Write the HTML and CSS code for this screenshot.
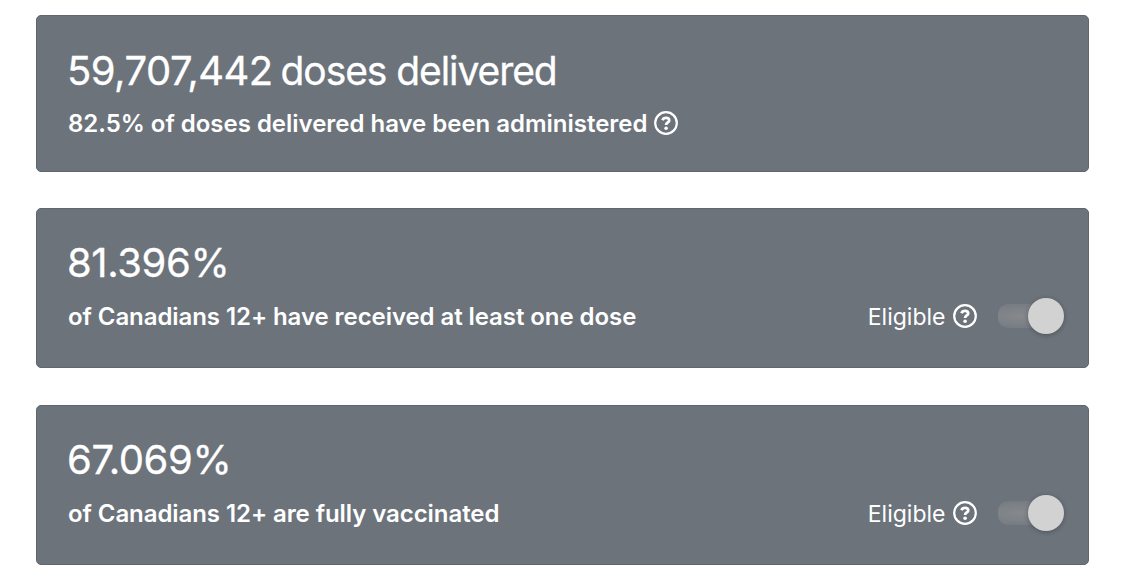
FILE: index.html
```
<!DOCTYPE html>
<html lang="en">
	<head>
		<title>Vaccination Tracker</title>
		<meta charset="utf-8" />
		<meta name="viewport" content="width=device-width, initial-scale=1" />
		<link rel="stylesheet" href="styles.css">
	</head>
	<body>
		<svg class="defs">
			<symbol id="help" viewBox="0 0 24 24">
				<circle cx="12" cy="12" r="10.8" />
				<path class="hook" d="M8.5 9.2C9.1 7.6 10.3 6.8 12 6.8C13.9 6.8 15.2 7.8 15.2 9.4C15.2 11.6 12.1 11.4 12.1 14" />
				<circle class="dot" cx="12.1" cy="17.2" r="1.8" />
			</symbol>
		</svg>
		<main class="cards">
			<section class="card delivered">
				<h2>59,707,442 <span class="words">doses delivered</span></h2>
				<div class="row">
					<p class="caption">82.5% of doses delivered have been administered</p>
					<svg class="help"><use href="#help" /></svg>
				</div>
			</section>
			<section class="card">
				<h2>81.396%</h2>
				<div class="row">
					<p class="caption tight">of Canadians 12+ have received at least one dose</p>
					<div class="eligible">
						<span class="label">Eligible</span>
						<svg class="help"><use href="#help" /></svg>
						<span class="switch"><span class="thumb"></span></span>
					</div>
				</div>
			</section>
			<section class="card full">
				<h2>67.069%</h2>
				<div class="row">
					<p class="caption tight">of Canadians 12+ are fully vaccinated</p>
					<div class="eligible">
						<span class="label">Eligible</span>
						<svg class="help"><use href="#help" /></svg>
						<span class="switch"><span class="thumb"></span></span>
					</div>
				</div>
			</section>
		</main>
	</body>
</html>
```
FILE: styles.css
```
* {
	box-sizing: border-box;
}
body {
	margin: 0;
	background: #fff;
	color: #fff;
	font-family: Inter, sans-serif;
}
.defs {
	display: none;
}
.cards {
	display: flex;
	flex-direction: column;
	gap: 36.5px;
	padding: 14.5px 36px 0;
}
.card {
	height: 160px;
	padding: 30px 24.5px 0 31px;
	background: #6c737b;
	border: 1px solid #5f666e;
	border-radius: 5px;
}
.card.delivered {
	height: 157px;
	padding-top: 31px;
}
h2 {
	margin: 0 0 0 -1px;
	font-size: 40px;
	font-weight: 400;
	line-height: 48px;
	letter-spacing: -0.4px;
	white-space: nowrap;
	-webkit-text-stroke: 0.3px #fff;
}
.delivered h2 {
	letter-spacing: -0.5px;
}
.delivered .words {
	margin-left: -3px;
	font-size: 39px;
	letter-spacing: -1.07px;
}
.row {
	display: flex;
	align-items: center;
	height: 36px;
	margin-top: 11px;
}
.caption {
	margin: 0;
	font-size: 24px;
	font-weight: 600;
	line-height: 30px;
	letter-spacing: -0.02px;
	white-space: nowrap;
}
.caption.tight {
	padding-top: 1.8px;
	letter-spacing: -0.07px;
}
.full .caption,
.full .label {
	padding-top: 3px;
}
.help {
	width: 24px;
	height: 24px;
	margin-left: 7px;
	fill: none;
	stroke: #fff;
	stroke-width: 2.2;
}
.delivered .help {
	margin-bottom: 2px;
}
.hook {
	stroke-width: 2.8;
}
.dot {
	fill: #fff;
	stroke: none;
}
.eligible {
	display: flex;
	align-items: center;
	margin-left: auto;
}
.label {
	padding-top: 1.8px;
	font-size: 23px;
	line-height: 30px;
}
.switch {
	display: flex;
	align-items: center;
	justify-content: flex-end;
	width: 66px;
	height: 24px;
	margin-left: 21px;
	border-radius: 10px;
	background: radial-gradient(ellipse at 35% 50%, #86898c 0%, #7e8388 40%, #757b82 75%);
}
.thumb {
	width: 36px;
	height: 36px;
	flex-shrink: 0;
	border-radius: 50%;
	background: #d2d2d2;
	box-shadow: 0 1px 5px rgba(0, 0, 0, 0.28);
}
```
